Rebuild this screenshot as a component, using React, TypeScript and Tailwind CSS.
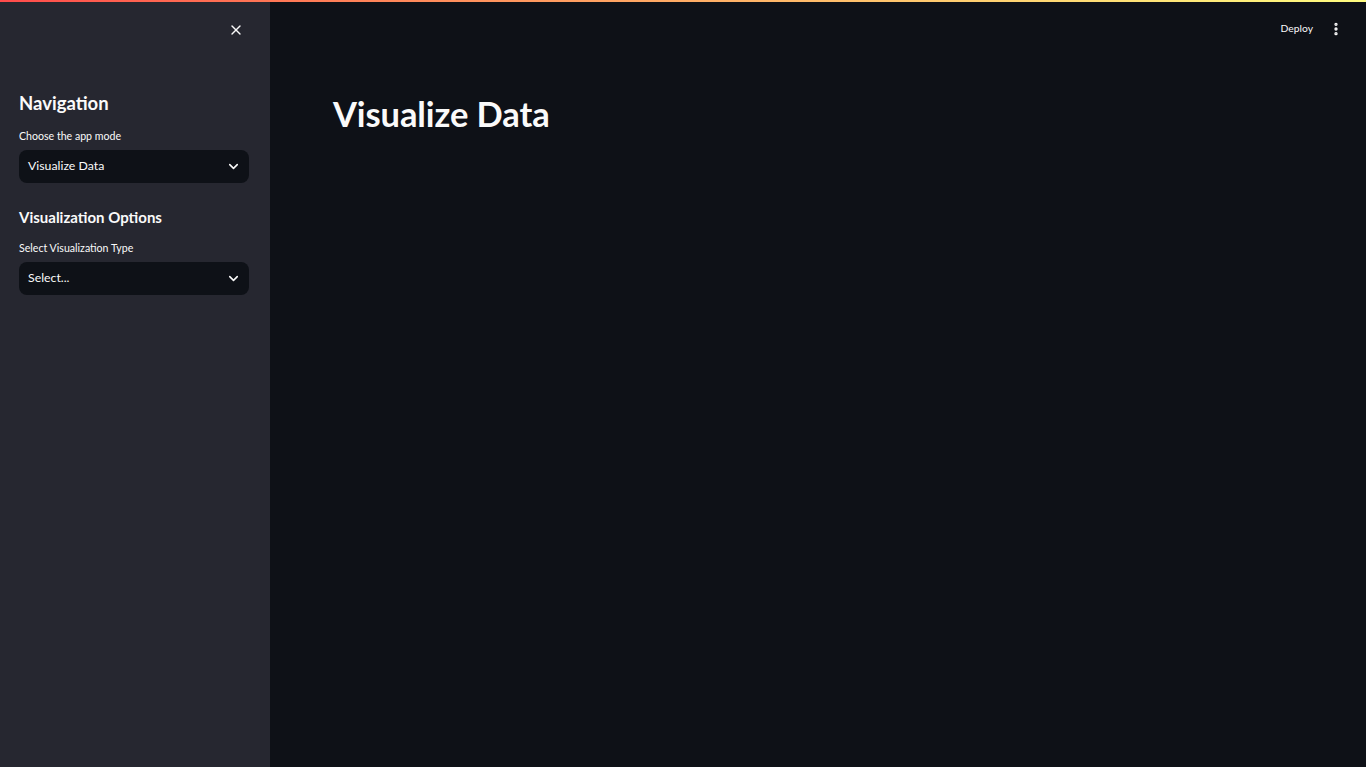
import { ChevronDown, X, EllipsisVertical } from 'lucide-react';

function SelectBox({ value }: { value: string }) {
  return (
    <div className="flex h-[33px] w-full items-center justify-between rounded-lg bg-[#0e1117] pl-[9px] pr-[8px] text-[12.3px] text-[#fafafa]">
      <span>{value}</span>
      <ChevronDown size={15} strokeWidth={2.5} className="text-[#fafafa]" />
    </div>
  );
}

export default function App() {
  return (
    <div
      className="relative flex h-[767px] w-full overflow-hidden bg-[#0e1117] text-[#fafafa]"
      style={{ fontFamily: 'Lato, "Noto Sans", sans-serif' }}
    >
      <div className="absolute left-0 right-0 top-0 z-10 h-[2px] bg-gradient-to-r from-[#ff4b4b] to-[#fffd80]" />

      <aside className="flex w-[270px] shrink-0 flex-col bg-[#262730] pl-[19px] pr-[21px]">
        <div className="flex h-[60px] items-center justify-end pr-[5px]">
          <X size={16} strokeWidth={2} className="text-[#fafafa]" />
        </div>
        <h2 className="mt-[30px] text-[18.5px] font-bold leading-[26px]">Navigation</h2>
        <div className="mt-[12px] text-[10.6px] leading-[16px]">Choose the app mode</div>
        <div className="mt-[6px]">
          <SelectBox value="Visualize Data" />
        </div>
        <h2 className="mt-[21px] text-[15px] font-bold leading-[26px]">Visualization Options</h2>
        <div className="mt-[10px] text-[10.6px] leading-[16px]">Select Visualization Type</div>
        <div className="mt-[6px]">
          <SelectBox value="Select..." />
        </div>
      </aside>

      <main className="flex flex-1 flex-col">
        <header className="flex h-[58px] items-center justify-end gap-[15px] pr-[22px]">
          <span className="text-[10.3px]">Deploy</span>
          <EllipsisVertical size={16} strokeWidth={3} className="text-[#fafafa]" />
        </header>
        <h1 className="ml-[63px] mt-[34px] text-[34.5px] font-bold leading-[44px] tracking-[-0.1px]">Visualize Data</h1>
      </main>
    </div>
  );
}
